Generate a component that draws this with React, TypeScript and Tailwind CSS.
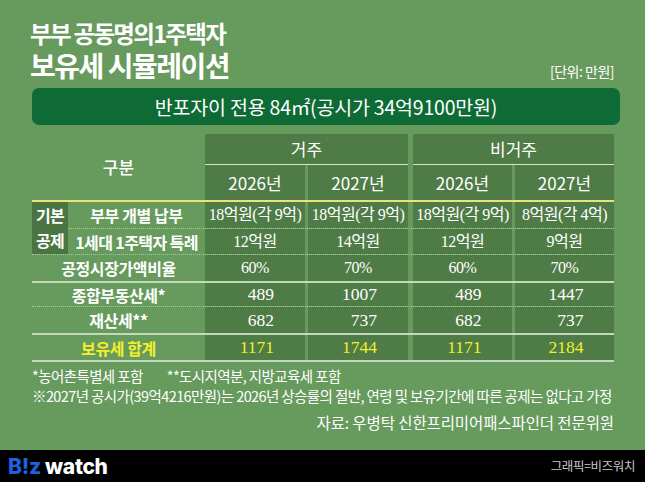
import React from "react";

const CELL = "bg-[#4f7b46]";

function DataCells({ vals, yellow, num }: { vals: string[]; yellow?: boolean; num?: boolean }) {
  const widths = ["w-[100px]", "w-[100px] ml-[3px]", "w-[99px] ml-[5px]", "w-[99px] ml-[3px]"];
  return (
    <>
      {vals.map((v, i) => (
        <div
          key={i}
          className={`${widths[i]} ${CELL} h-full flex items-center justify-center font-['Liberation_Serif','Noto_Sans_CJK_KR',serif] ${
            yellow ? "text-[#f3ef2c]" : "text-white"
          } ${num ? "text-[17.5px]" : "text-[16px] tracking-[-0.5px]"}`}
        >
          {num ? <span className="inline-block w-[38px] text-right">{v}</span> : v}
        </div>
      ))}
    </>
  );
}

function Row({
  label,
  vals,
  h,
  border,
  yellow,
  num,
}: {
  label: string;
  vals: string[];
  h: string;
  border: string;
  yellow?: boolean;
  num?: boolean;
}) {
  return (
    <div className={`flex ${h} ${border}`}>
      <div
        className={`w-[173px] h-full flex items-center justify-center text-[16px] font-bold tracking-[-0.4px] ${
          yellow ? "text-[#f3ef2c]" : "text-white"
        }`}
      >
        {label}
      </div>
      <DataCells vals={vals} yellow={yellow} num={num} />
    </div>
  );
}

export default function App() {
  return (
    <div className="w-[645px] h-[482px] bg-[#679a5d] flex flex-col font-['Noto_Sans_CJK_KR','Noto_Sans',sans-serif] overflow-hidden">
      <div className="flex-1 flex flex-col">
        {/* Title */}
        <div className="pl-[30px] pr-[31px] pt-[19px]">
          <div className="text-white text-[23.5px] leading-[28px] font-bold tracking-[-1.7px]">부부 공동명의1주택자</div>
          <div className="flex items-end justify-between mt-[2px]">
            <div className="text-white text-[28px] leading-[32px] font-bold tracking-[-1.5px]">보유세 시뮬레이션</div>
            <div className="text-white text-[14px] leading-[18px] tracking-[-0.5px] mb-[1px]">[단위: 만원]</div>
          </div>
        </div>

        {/* Banner */}
        <div className="mx-[32px] w-[588px] mt-[7px] h-[37px] rounded-[7px] bg-[#0e6b35] flex items-center justify-center text-white text-[19.5px] tracking-[-0.2px]">
          반포자이 전용 84㎡(공시가 34억9100만원)
        </div>

        {/* Table */}
        <div className="ml-[32px] w-[582px] mt-[9px] text-white">
          <div className="flex h-[66px]">
            <div className="w-[173px] flex items-center justify-center text-[17px] font-medium">구분</div>
            <div className="w-[203px] flex flex-col">
              <div className={`h-[31px] ${CELL} border-b border-[#d3e4cc] flex items-center justify-center text-[17px]`}>거주</div>
              <div className="flex h-[35px]">
                <div className={`w-[100px] ${CELL} flex items-center justify-center text-[17px]`}>2026년</div>
                <div className={`w-[100px] ml-[3px] ${CELL} flex items-center justify-center text-[17px]`}>2027년</div>
              </div>
            </div>
            <div className="w-[201px] ml-[5px] flex flex-col">
              <div className={`h-[31px] ${CELL} border-b border-[#d3e4cc] flex items-center justify-center text-[17px]`}>비거주</div>
              <div className="flex h-[35px]">
                <div className={`w-[99px] ${CELL} flex items-center justify-center text-[17px]`}>2026년</div>
                <div className={`w-[99px] ml-[3px] ${CELL} flex items-center justify-center text-[17px]`}>2027년</div>
              </div>
            </div>
          </div>
          <div className="h-[2px] bg-[#e9e37c]" />

          {/* 기본공제 block */}
          <div className="flex border-b border-dotted border-[#a9cba0]">
            <div className="w-[36px] bg-[#4a7542] flex flex-col items-center justify-center text-[16px] font-bold leading-[25px] tracking-[-0.8px]">
              <span>기본</span>
              <span>공제</span>
            </div>
            <div className="flex flex-col">
              <div className="flex h-[27px] border-b border-dotted border-[#a9cba0]">
                <div className="w-[137px] h-full flex items-center justify-center text-[16px] font-bold tracking-[-0.4px]">부부 개별 납부</div>
                <DataCells vals={["18억원(각 9억)", "18억원(각 9억)", "18억원(각 9억)", "8억원(각 4억)"]} />
              </div>
              <div className="flex h-[25px]">
                <div className="w-[137px] h-full flex items-center justify-center text-[16px] font-bold tracking-[-0.6px]">1세대 1주택자 특례</div>
                <DataCells vals={["12억원", "14억원", "12억원", "9억원"]} />
              </div>
            </div>
          </div>

          <Row label="공정시장가액비율" vals={["60%", "70%", "60%", "70%"]} h="h-[28px]" border="border-b-2 border-[#c2d9bb]" />
          <Row label="종합부동산세*" vals={["489", "1007", "489", "1447"]} h="h-[24px]" border="border-b border-dotted border-[#a9cba0]" num />
          <Row label="재산세**" vals={["682", "737", "682", "737"]} h="h-[28px]" border="border-b-2 border-[#c2d9bb]" num />
          <Row label="보유세 합계" vals={["1171", "1744", "1171", "2184"]} h="h-[27px]" border="border-b-2 border-[#c2d9bb]" yellow num />
        </div>

        {/* Notes */}
        <div className="ml-[32px] w-[582px] mt-[4px] text-white text-[14.5px] tracking-[-0.6px]">
          <div className="leading-[20px] flex">
            <span>*농어촌특별세 포함</span>
            <span className="inline-block w-[24px]" />
            <span>**도시지역분, 지방교육세 포함</span>
          </div>
          <div className="leading-[20px]">※2027년 공시가(39억4216만원)는 2026년 상승률의 절반, 연령 및 보유기간에 따른 공제는 없다고 가정</div>
          <div className="leading-[20px] mt-[6px] text-right text-[15.5px] tracking-[-0.1px]">자료: 우병탁 신한프리미어패스파인더 전문위원</div>
        </div>
      </div>

      {/* Footer */}
      <div className="h-[32px] bg-black flex items-center justify-between pl-[8px] pr-[10px]">
        <div className="font-['Inter',sans-serif] text-[21px] font-extrabold tracking-[-0.3px] leading-none">
          <span className="text-[#1d62dc]">B!z</span>
          <span className="text-white"> watch</span>
        </div>
        <div className="text-[#c9c9c9] text-[12.5px] tracking-[-0.4px]">그래픽=비즈워치</div>
      </div>
    </div>
  );
}
